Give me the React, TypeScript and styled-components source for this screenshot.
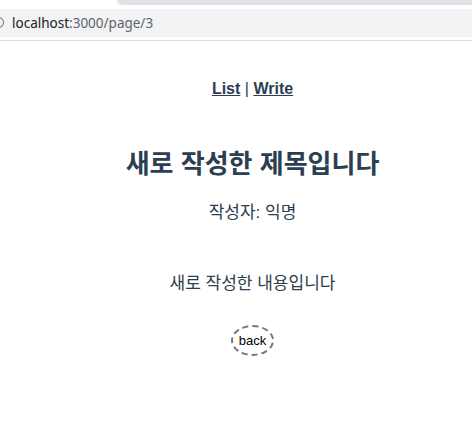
import React from 'react';
import styled, { createGlobalStyle } from 'styled-components';

const GlobalStyle = createGlobalStyle`
  html, body {
    margin: 0;
    padding: 0;
    background: #ffffff;
  }
  body {
    font-family: "Liberation Sans", Arial, "Noto Sans CJK KR", sans-serif;
    -webkit-font-smoothing: antialiased;
  }
`;

const Chrome = styled.div`
  height: 41px;
  border-bottom: 1px solid #dadce0;
  box-sizing: border-box;
  background: #ffffff;
`;

const TabStrip = styled.div`
  height: 5px;
  display: flex;
  justify-content: flex-end;
`;

const TabFill = styled.div`
  width: 355px;
  height: 5px;
  background: #dee1e6;
  border-bottom-left-radius: 6px;
`;

const AddressBar = styled.div`
  margin-top: 4px;
  height: 28px;
  background: #f1f3f4;
  display: flex;
  align-items: center;
  padding-left: 12px;
  font-family: "Noto Sans", "Liberation Sans", sans-serif;
  font-size: 13.5px;
  color: #5f6368;
  position: relative;
`;

const Host = styled.span`
  color: #202124;
`;

const PageIcon = styled.span`
  position: absolute;
  left: -7px;
  top: 8px;
  width: 9px;
  height: 9px;
  border: 1.5px solid #5f6368;
  border-radius: 50%;
`;

const Page = styled.div`
  color: #2c3e50;
  text-align: center;
  padding-left: 33px;
  font-family: "Liberation Sans", Arial, "Noto Sans CJK KR", sans-serif;
`;

const Nav = styled.nav`
  padding: 39px 0 0;
  font-size: 16px;
  line-height: 18px;
`;

const NavLink = styled.a`
  color: #2c3e50;
  font-weight: bold;
  text-decoration: underline;
  cursor: pointer;
`;

const Title = styled.h1`
  margin: 50px 0 0;
  font-size: 26px;
  line-height: 32px;
  font-weight: bold;
`;

const Meta = styled.p`
  margin: 22px 0 0;
  font-size: 17px;
  line-height: 22px;
`;

const Content = styled.p`
  margin: 49px 0 0;
  font-size: 17px;
  line-height: 22px;
`;

const Actions = styled.div`
  margin-top: 30px;
  display: flex;
  justify-content: center;
`;

const BackButton = styled.button`
  padding: 7px 6px;
  font-family: "Liberation Sans", Arial, sans-serif;
  font-size: 13px;
  line-height: 13px;
  color: #000000;
  background: #ffffff;
  border: 2px dashed #777777;
  border-radius: 50%;
  cursor: pointer;
`;

export default function App() {
  return (
    <>
      <GlobalStyle />
      <Chrome>
        <TabStrip>
          <TabFill />
        </TabStrip>
        <AddressBar>
          <PageIcon />
          <Host>localhost</Host>:3000/page/3
        </AddressBar>
      </Chrome>
      <Page>
        <Nav>
          <NavLink>List</NavLink> | <NavLink>Write</NavLink>
        </Nav>
        <Title>새로 작성한 제목입니다</Title>
        <Meta>작성자: 익명</Meta>
        <Content>새로 작성한 내용입니다</Content>
        <Actions>
          <BackButton>back</BackButton>
        </Actions>
      </Page>
    </>
  );
}
